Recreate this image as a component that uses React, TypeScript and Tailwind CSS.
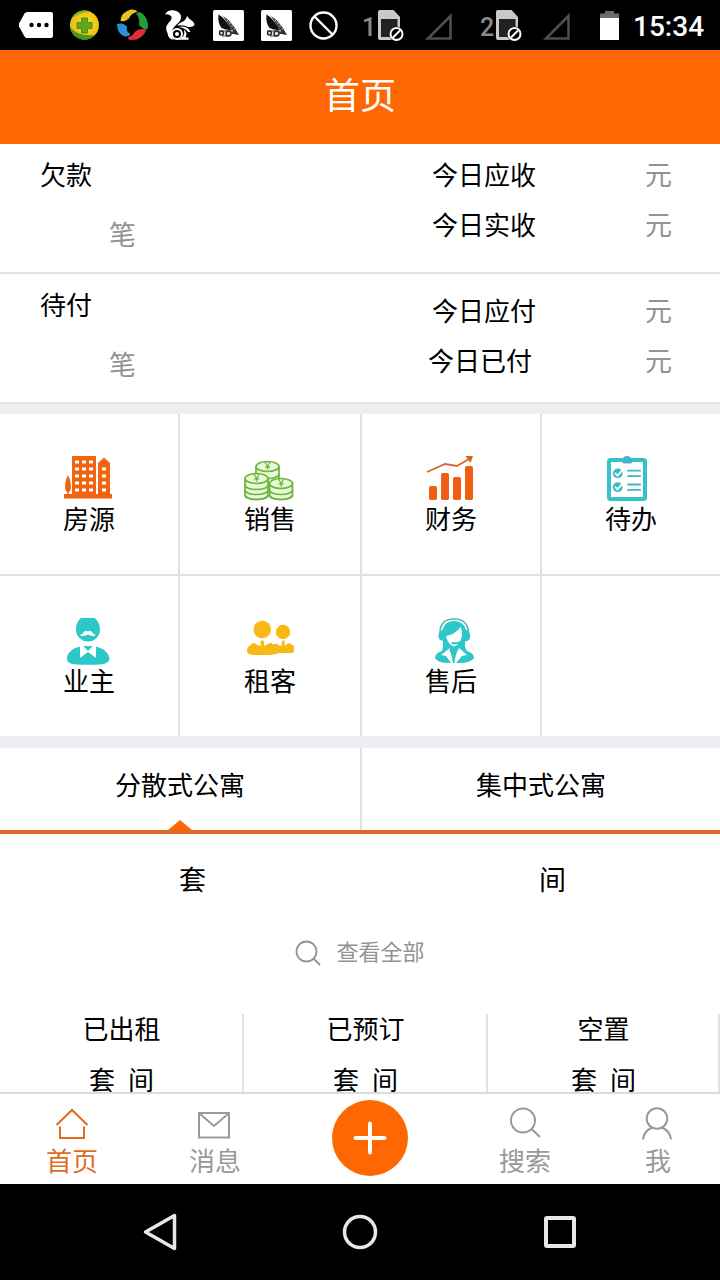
import type { ReactNode } from 'react';

const ORANGE = '#fe6702';
const TEAL = '#2cc7c8';

/* ---------- status bar icons ---------- */

function TagIcon() {
  return (
    <svg width="34" height="26" viewBox="0 0 34 26" className="ml-[19px]">
      <path d="M8 0H32a2 2 0 0 1 2 2V24a2 2 0 0 1-2 2H8Q6.500 26 5.500 24.500L0 14.500Q-.500 13 0 11.500L5.500 1.500Q6.500 0 8 0Z" fill="#fff" />
      <circle cx="12.500" cy="13" r="2.200" />
      <circle cx="20" cy="13" r="2.200" />
      <circle cx="27.500" cy="13" r="2.200" />
    </svg>
  );
}

function ShieldIcon() {
  return (
    <svg width="30" height="30" viewBox="0 0 30 30" className="ml-[17px]">
      <defs>
        <radialGradient id="shield" cx=".55" cy=".45" r=".6">
          <stop offset="0" stopColor="#ffe22a" />
          <stop offset="1" stopColor="#e6b80c" />
        </radialGradient>
      </defs>
      <circle cx="14.500" cy="15" r="14.500" fill="url(#shield)" />
      <path d="M1 9.500A14.500 14.500 0 0 1 20 1.700Q8 2.500 1 9.500Z" fill="#7db534" />
      <path d="M0 17Q8 27 25 25A14.500 14.500 0 0 1 0 17Z" fill="#4f9427" />
      <path d="M11.500 8h6v4.500H22v6h-4.500V23h-6v-4.500H7v-6h4.500Z" fill="#5fa81e" stroke="#3b8119" strokeWidth=".8" strokeLinejoin="round" />
    </svg>
  );
}

function SwirlIcon() {
  return (
    <svg width="32" height="32" viewBox="0 0 32 32" className="ml-[17px]">
      <path d="M3.500 12Q4 3 14 .500Q18 0 20.500 2.500Q13 5 12 9.500Q8 13 3.500 12Z" fill="#e8c51c" />
      <path d="M19 4Q23 2 26 5Q32.500 12 30.500 20Q26 21 22 16Q23 9 19 4Z" fill="#21a03a" />
      <path d="M0 15Q0 25 8 27.500Q12 28 13.500 25Q9 23 10 18Q7 13 0 15Z" fill="#2b8fd8" />
      <path d="M29.500 20.500Q25 32 13 31Q10 30 11.500 28Q16 27 17.500 23Q22 19 29.500 20.500Z" fill="#dd2f33" />
    </svg>
  );
}

function SquirrelIcon() {
  return (
    <svg width="30" height="31" viewBox="0 0 30 31" className="ml-4">
      {/* tail and back */}
      <path d="M0 4.500Q2 0 8 .200Q16 1 16 7.500Q16 11 11.500 14.500Q7 18 6.500 24Q6.500 28 9 30Q3 29 2.500 23Q-.500 18 3 13.500Q8 9 6 6Q4 3.500 0 4.500Z" fill="#fff" />
      {/* head and arm */}
      <path d="M12 15.500Q15 12 19 11L21 8.500L22 6L24.500 9Q29.500 12 29.500 15Q28 17.500 23 17Q19 14.500 12 15.500Z" fill="#fff" />
      <path d="M14 16.800Q20 16 23.500 18.800L25.500 22H23L21.500 20Q18 17.500 14 16.800Z" fill="#fff" />
      <path d="M19 19.500Q23 23 20.500 27.500H23.500V29.800H13Q21 27 19 19.500Z" fill="#fff" />
      {/* wheel */}
      <circle cx="12" cy="24" r="5" fill="none" stroke="#fff" strokeWidth="2" />
      <circle cx="12" cy="24" r="2" fill="#fff" />
    </svg>
  );
}

function SailIcon({ className }: { className: string }) {
  return (
    <svg width="31" height="31" viewBox="0 0 31 31" className={className}>
      <rect width="31" height="31" rx="1.500" fill="#fff" />
      <path d="M5.500 4.500Q12 8 19 20Q13 20.500 8.500 18Q4.500 13 5.500 4.500Z" fill="#111" />
      <path d="M10 6L15.500 10L22 18L26 25L17 23.500L20 21Z" fill="#333" />
      <path d="M14 10L22 20" stroke="#fff" strokeWidth=".8" strokeDasharray="2 1.500" />
      <g fill="#ddd" stroke="#222" strokeWidth="1.400">
        <circle cx="8.500" cy="23" r="2" />
        <circle cx="15.500" cy="23.500" r="2.500" />
      </g>
      <path d="M6 21H19M9 26H16" stroke="#333" strokeWidth="1" />
    </svg>
  );
}

function BanIcon() {
  return (
    <svg width="29" height="29" viewBox="0 0 29 29" className="ml-[17px]" fill="none" stroke="#fff" strokeWidth="2.400">
      <circle cx="14.500" cy="14.500" r="13" />
      <path d="M5.500 5.500L23.500 23.500" />
    </svg>
  );
}

function SimSlot({ slot }: { slot: string }) {
  return (
    <div className="flex h-[31px] items-start">
      <span className="w-4 pt-[5px] font-['Roboto',sans-serif] text-[25px] leading-[25px] font-medium text-[#8a8a8a]">{slot}</span>
      <svg width="26" height="32" viewBox="0 0 26 32">
        <path d="M2 0H15.500L22 7V30H2Q0 30 0 28V2Q0 0 2 0Z" fill="#c9c9c9" />
        <rect x="3" y="9" width="16.500" height="18" fill="#222" />
        <circle cx="18.500" cy="24" r="7.500" fill="#000" />
        <circle cx="18.500" cy="24" r="6" fill="none" stroke="#fff" strokeWidth="2" />
        <path d="M15 27.500L22 20.500" stroke="#fff" strokeWidth="2" />
      </svg>
    </div>
  );
}

function SignalIcon() {
  return (
    <svg width="29" height="29" viewBox="0 0 29 29" className="mt-[3px] ml-5">
      <path d="M4 26.500H26.500V4Z" fill="none" stroke="#4d4d4d" strokeWidth="2.600" />
    </svg>
  );
}

function StatusBar() {
  return (
    <div className="flex h-[50px] shrink-0 items-center bg-black">
      <TagIcon />
      <ShieldIcon />
      <SwirlIcon />
      <SquirrelIcon />
      <SailIcon className="ml-[18px]" />
      <SailIcon className="ml-[17px]" />
      <BanIcon />
      <div className="ml-6">
        <SimSlot slot="1" />
      </div>
      <SignalIcon />
      <div className="ml-[27px]">
        <SimSlot slot="2" />
      </div>
      <SignalIcon />
      <svg width="19" height="29" viewBox="0 0 19 29" className="ml-[29px]">
        <path d="M5 0h9v2.500h5V7H0V2.500H5Z" fill="#6b6b6b" />
        <rect y="7" width="19" height="22" fill="#fff" />
      </svg>
      <span className="ml-[14px] pt-1 font-['Roboto',sans-serif] text-[28px] leading-8 font-medium text-white">15:34</span>
    </div>
  );
}

/* ---------- menu icons, all drawn on a 52x48 canvas ---------- */

function HouseIcon() {
  return (
    <g transform="translate(1 1)">
      <path d="M8 0H32V38H34V7L40 1.500L46 7V38H48V42.500H0V38H8Z" fill="#f0640f" />
      <path d="M4 19Q7 24 7 30Q7 35 4.800 36V39H3.200V36Q1 35 1 30Q1 24 4 19Z" fill="#f0640f" />
      <g fill="#fff">
        {[4.5, 11.5, 18.5, 25.5, 32.5].map((y) => (
          <path key={y} d={`M11 ${y}h4v3h-4zM18 ${y}h4v3h-4zM25 ${y}h4v3h-4z`} />
        ))}
        {[11.5, 18.5, 25.5, 32.5].map((y) => (
          <rect key={y} x="38" y={y} width="4" height="3" />
        ))}
      </g>
    </g>
  );
}

function Coins({ x, y, bottom }: { x: number; y: number; bottom: number }) {
  const rings = [];
  for (let level = bottom; level > y + 3; level -= 5) rings.push(level);
  return (
    <g stroke="#6cb33f" strokeWidth="1.700">
      <path d={`M${x - 11.5} ${y}V${bottom}A11.500 4.500 0 0 0 ${x + 11.5} ${bottom}V${y}`} fill="#e6fbd6" />
      {rings.map((level) => (
        <path key={level} d={`M${x - 11.5} ${level}A11.500 4.500 0 0 0 ${x + 11.5} ${level}`} fill="none" />
      ))}
      <ellipse cx={x} cy={y} rx="11.500" ry="5" fill="#e6fbd6" />
      <text x={x} y={y + 3.8} textAnchor="middle" fontSize="11" fontFamily="Liberation Sans, sans-serif" fill="#5aab2c" stroke="none">
        ¥
      </text>
    </g>
  );
}

function CoinsIcon() {
  return (
    <g transform="translate(0 5)">
      <Coins x={23.5} y={6.5} bottom={19} />
      <Coins x={12.5} y={18.5} bottom={35} />
      <Coins x={37} y={23.5} bottom={35} />
    </g>
  );
}

function ChartIcon() {
  return (
    <g transform="translate(2 1)" fill="#ee5f14">
      <rect x="2" y="30" width="8" height="14" rx="1.800" />
      <rect x="14" y="17" width="8" height="27" rx="1.800" />
      <rect x="26" y="21" width="8" height="23" rx="1.800" />
      <rect x="38" y="10" width="8" height="34" rx="1.800" />
      <path d="M0 16L18 8L30 10L42 3" fill="none" stroke="#d8682a" strokeWidth="1.800" />
      <path d="M38.500 0H46L43.500 7Z" fill="#e0601c" />
    </g>
  );
}

function ClipboardIcon() {
  return (
    <g transform="translate(2 1)">
      <rect x="2" y="4" width="36" height="39" rx="1.500" fill="#fff" stroke="#36c3c5" strokeWidth="4" />
      <path d="M14 2H16Q17 0 20 0T24 2H26.500V5L24 7.500H16.500L14 5Z" fill="#45b5cc" />
      {[17.4, 31.2].map((y) => (
        <g key={y}>
          <circle cx="10.700" cy={y} r="4.900" fill="#3dbcc0" />
          <path d={`M8 ${y - 0.5}l2.500 2.700l4.500-5`} fill="none" stroke="#fff" strokeWidth="1.800" />
          <path d={`M20.300 ${y - 2.7}h13.500M20.300 ${y + 2.7}h13.500`} stroke="#3fb9bd" strokeWidth="1.800" />
        </g>
      ))}
    </g>
  );
}

function OwnerIcon() {
  return (
    <g transform="translate(3 0)">
      <path d="M15 1H28.500Q34 5 34 12.500A12 12 0 0 1 10 12.500Q10 5 15 1Z" fill={TEAL} />
      <path d="M13.500 18Q16.500 17.500 18 15Q20 13 22 14.500Q24 13 26 15Q27.500 17.500 30 18Q26 20 22 17.500Q18 20 13.500 18Z" fill="#fff" />
      <path d="M14 29.500H30Q43 33 43.500 42Q43 47.700 30 47.700H14Q1 47.700 1 42Q1 33 14 29.500Z" fill={TEAL} />
      <path d="M14 28V41L22 35L30 41V28L25 29.500L22 33.500L18.500 29.500Z" fill="#fff" />
      <path d="M17.500 29H26.500L22 34Z" fill={TEAL} />
    </g>
  );
}

function TenantsIcon() {
  return (
    <g transform="translate(3 3)" fill="#f8b916">
      <circle cx="15.300" cy="9.500" r="8.800" />
      <circle cx="36" cy="12" r="7.200" />
      <path d="M0 31Q0 27 2.500 26L5 23.500Q9 22.500 10 25L13.700 26V21.500Q15.300 19 17 21.500V26L21 24Q24 22 26 24.500L29.500 23.500L32 25.500L34.800 25.500V21.500Q36.200 19 37.700 21.500V26L40 24Q43 22 45 25L47 26V32Q45 34 40 33H32Q27 35 18 35H8Q0 35 0 31Z" />
    </g>
  );
}

function ServiceIcon() {
  return (
    <g transform="translate(9 0)">
      <path d="M6 16Q6 2 20 2T34.500 16" fill="none" stroke="#4fb9ba" strokeWidth="1.600" />
      <path
        d="M9 12Q11 4 20 4T31.500 12L34 14Q37 17 36 21Q35 24 31 24.500L31 30L33 34Q40 36 40 41Q37 46 24 46H16Q3 46 1 41Q1 36 8 34L9 30V24Q5 23.500 4.500 20Q4 16 7 14Z"
        fill={TEAL}
      />
      <path d="M12 19Q22 17 26.500 10Q29 14 27.500 21Q25 28 20 29.500Q14 28 12 19Z" fill="#fff" />
      <path d="M29 24Q25 27 17.500 26" fill="none" stroke={TEAL} strokeWidth="2" />
      <path d="M16 31L7 38L12 39L17 46H19Q18 38 15.500 33.500ZM25 31L33 38L28 39L22 46H20.500Q21 38 25 31Z" fill="#fff" />
    </g>
  );
}

const MENU: { label: string; icon: ReactNode }[] = [
  { label: '房源', icon: <HouseIcon /> },
  { label: '销售', icon: <CoinsIcon /> },
  { label: '财务', icon: <ChartIcon /> },
  { label: '待办', icon: <ClipboardIcon /> },
  { label: '业主', icon: <OwnerIcon /> },
  { label: '租客', icon: <TenantsIcon /> },
  { label: '售后', icon: <ServiceIcon /> },
];

function MenuGrid() {
  return (
    <div className="grid h-[322px] shrink-0 grid-cols-[178px_180px_178px_178px] grid-rows-[160px_160px] gap-0.5 bg-[#e0e0e0]">
      {MENU.map(({ label, icon }) => (
        <button key={label} className="flex flex-col items-center bg-white pt-[41px]">
          <svg width="52" height="48" viewBox="0 0 52 48">
            {icon}
          </svg>
          <span className="text-[26px] leading-[29px]">{label}</span>
        </button>
      ))}
      <div className="bg-white" />
    </div>
  );
}

/* ---------- money summary ---------- */

function Amount({ label, nudge }: { label: string; nudge?: boolean }) {
  return (
    <div className="flex h-[50px] items-center justify-between">
      <span className={nudge ? '-ml-1' : ''}>{label}</span>
      <span className="text-[27px] text-[#939393]">元</span>
    </div>
  );
}

function SummaryRow({ title, children }: { title: string; children: ReactNode }) {
  return (
    <div className="flex h-[130px] shrink-0 justify-between border-b-2 border-[#e2e2e2] pr-12 pl-10 text-[26px] leading-8">
      <div className="pt-[14px]">
        <p>{title}</p>
        <p className="mt-7 pl-[69px] text-[27px] text-[#939393]">笔</p>
      </div>
      <div className="w-60">{children}</div>
    </div>
  );
}

const STATS = [
  { label: '已出租', width: 'w-[244px]' },
  { label: '已预订', width: 'w-[244px]' },
  { label: '空置', width: 'w-[232px]' },
];

/* ---------- bottom tabs ---------- */

function NavItem({ label, className, children }: { label: string; className: string; children: ReactNode }) {
  return (
    <button className={`flex flex-col items-center pt-[13px] text-[26px] leading-8 ${className}`}>
      <svg width="34" height="36" viewBox="0 0 34 36" fill="none" stroke="currentColor" strokeWidth="2" className="mb-px">
        {children}
      </svg>
      {label}
    </button>
  );
}

function BottomNav() {
  return (
    <nav className="flex h-[92px] shrink-0 border-t-2 border-[#dcdcdc] bg-white">
      <NavItem label="首页" className="w-36 text-[#df6d1c]">
        <path d="M1.500 18L17 3L32.500 18M5 19.500V31H29V19.500" />
      </NavItem>
      <NavItem label="消息" className="w-[142px] text-[#999]">
        <path d="M1 6H31V30.500H1ZM1.500 6.500L16 19L30.500 6.500" />
      </NavItem>
      <div className="flex w-[168px] justify-center pt-1.5">
        <button className="flex h-[76px] w-[76px] items-center justify-center rounded-full bg-[#fe6702]">
          <svg width="34" height="34" viewBox="0 0 34 34" stroke="#fff" strokeWidth="4" strokeLinecap="round">
            <path d="M17 2.500V31.500M2.500 17H31.500" />
          </svg>
        </button>
      </div>
      <NavItem label="搜索" className="w-[142px] text-[#999]">
        <circle cx="15" cy="13.500" r="12" />
        <path d="M23.500 22L32 30" />
      </NavItem>
      <NavItem label="我" className="w-[124px] text-[#999]">
        <circle cx="16" cy="11.500" r="10.300" />
        <path d="M2 32.500Q3 24 11 20.500M21 20.500Q29 24 30 32.500" />
      </NavItem>
    </nav>
  );
}

function AndroidKeys() {
  return (
    <div className="flex h-24 shrink-0 items-center justify-center gap-[164px] bg-black">
      <svg width="36" height="40" viewBox="0 0 36 40" fill="none" stroke="#e8e8e8" strokeWidth="3.500" strokeLinejoin="round">
        <path d="M3.500 20L32.500 3.500V36.500Z" />
      </svg>
      <svg width="36" height="36" viewBox="0 0 36 36" fill="none" stroke="#e8e8e8" strokeWidth="3.500">
        <circle cx="18" cy="18" r="15.500" />
      </svg>
      <svg width="36" height="36" viewBox="0 0 36 36" fill="none" stroke="#e8e8e8" strokeWidth="4">
        <rect x="4" y="4" width="28" height="28" rx="1" />
      </svg>
    </div>
  );
}

export default function App() {
  return (
    <div className="flex h-[1280px] w-[720px] flex-col bg-white font-['Noto_Sans_CJK_SC',sans-serif] text-black">
      <StatusBar />
      <header className="flex h-[94px] shrink-0 items-center justify-center bg-[#fe6702] pb-2 text-4xl text-white">首页</header>

      <SummaryRow title="欠款">
        <div className="pt-[5px]">
          <Amount label="今日应收" />
          <Amount label="今日实收" />
        </div>
      </SummaryRow>
      <SummaryRow title="待付">
        <div className="pt-[11px]">
          <Amount label="今日应付" />
          <Amount label="今日已付" nudge />
        </div>
      </SummaryRow>
      <div className="h-2.5 shrink-0 bg-[#edeef2]" />

      <MenuGrid />
      <div className="h-3 shrink-0 bg-[#edeef2]" />

      <div className="flex h-[86px] shrink-0 border-b-4 border-[#dc6c20] text-[26px]">
        <button className="flex w-[362px] flex-col items-center border-r-2 border-[#e0e0e0] pt-5">
          <span className="leading-8">分散式公寓</span>
          <svg width="24" height="10" viewBox="0 0 24 10" className="mt-5">
            <path d="M12 0L24 10H0Z" fill={ORANGE} />
          </svg>
        </button>
        <button className="flex w-[358px] justify-center pt-5 leading-8">集中式公寓</button>
      </div>

      <div className="flex h-[84px] shrink-0 pt-[29px] text-[27px] leading-8">
        <span className="w-1/2 pl-[179px]">套</span>
        <span className="w-1/2 pl-[179px]">间</span>
      </div>
      <div className="flex h-[70px] shrink-0 items-center justify-center text-[22px] text-[#939393]">
        <svg width="26" height="26" viewBox="0 0 26 26" fill="none" stroke="currentColor" strokeWidth="1.800" className="mr-[15px]">
          <circle cx="11.500" cy="11.500" r="10" />
          <path d="M18.500 18.500L25 25" />
        </svg>
        <span className="pb-[5px]">查看全部</span>
      </div>

      <div className="mt-[26px] flex h-[78px] shrink-0 text-[26px]">
        {STATS.map(({ label, width }) => (
          <div key={label} className={`border-r-2 border-[#e0e0e0] pl-px text-center ${width}`}>
            <p className="leading-7">{label}</p>
            <p className="mt-[23px] flex justify-center gap-[13px] leading-7">
              <span>套</span>
              <span>间</span>
            </p>
          </div>
        ))}
      </div>

      <BottomNav />
      <AndroidKeys />
    </div>
  );
}
